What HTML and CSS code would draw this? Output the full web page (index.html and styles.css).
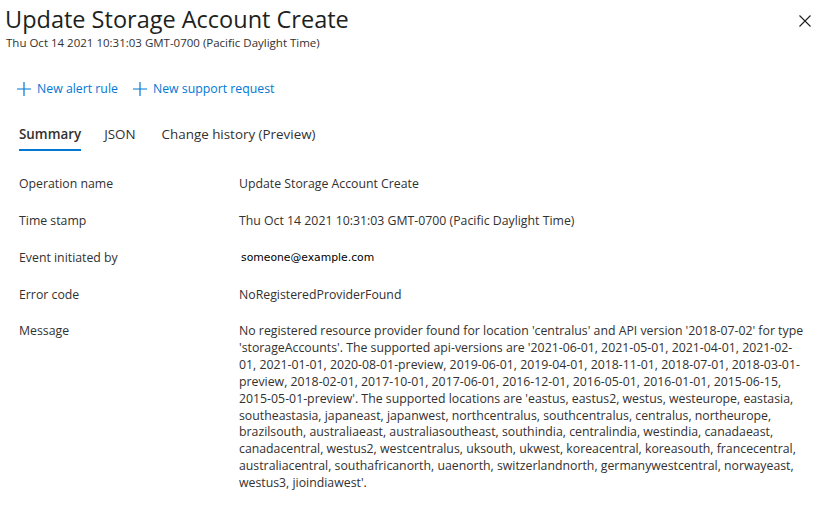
FILE: index.html
```html
<!DOCTYPE html>
<html lang="en">
<head>
<meta charset="utf-8">
<title>Update Storage Account Create</title>
<link rel="stylesheet" href="styles.css">
</head>
<body>
<div class="panel">
  <header class="head">
    <div class="titles">
      <h1 class="title">Update Storage Account Create</h1>
      <div class="subtitle">Thu Oct 14 2021 10:31:03 GMT-0700 (Pacific Daylight Time)</div>
    </div>
    <button class="close" aria-label="Close">
      <svg width="12" height="12" viewBox="0 0 12 12"><path d="M0.5 0.5L11.5 11.5M11.5 0.5L0.5 11.5" stroke="#201f1e" stroke-width="1.1" fill="none"/></svg>
    </button>
  </header>

  <div class="actions">
    <a class="action" href="#">
      <svg width="14" height="14" viewBox="0 0 14 14"><path d="M7 0V14M0 7H14" stroke="#0078d4" stroke-width="1.2" fill="none"/></svg>
      <span>New alert rule</span>
    </a>
    <a class="action" href="#">
      <svg width="14" height="14" viewBox="0 0 14 14"><path d="M7 0V14M0 7H14" stroke="#0078d4" stroke-width="1.2" fill="none"/></svg>
      <span>New support request</span>
    </a>
  </div>

  <nav class="tabs">
    <a class="tab active" href="#">Summary</a>
    <a class="tab" href="#">JSON</a>
    <a class="tab" href="#">Change history (Preview)</a>
  </nav>

  <dl class="details">
    <div class="row"><dt>Operation name</dt><dd>Update Storage Account Create</dd></div>
    <div class="row"><dt>Time stamp</dt><dd>Thu Oct 14 2021 10:31:03 GMT-0700 (Pacific Daylight Time)</dd></div>
    <div class="row"><dt>Event initiated by</dt><dd class="email">someone@example.com</dd></div>
    <div class="row"><dt>Error code</dt><dd>NoRegisteredProviderFound</dd></div>
    <div class="row"><dt>Message</dt><dd class="message">No registered resource provider found for location 'centralus' and API version '2018-07-02' for type<br>'storageAccounts'. The supported api-versions are '2021-06-01, 2021-05-01, 2021-04-01, 2021-02-<br>01, 2021-01-01, 2020-08-01-preview, 2019-06-01, 2019-04-01, 2018-11-01, 2018-07-01, 2018-03-01-<br>preview, 2018-02-01, 2017-10-01, 2017-06-01, 2016-12-01, 2016-05-01, 2016-01-01, 2015-06-15,<br>2015-05-01-preview'. The supported locations are 'eastus, eastus2, westus, westeurope, eastasia,<br>southeastasia, japaneast, japanwest, northcentralus, southcentralus, centralus, northeurope,<br>brazilsouth, australiaeast, australiasoutheast, southindia, centralindia, westindia, canadaeast,<br>canadacentral, westus2, westcentralus, uksouth, ukwest, koreacentral, koreasouth, francecentral,<br>australiacentral, southafricanorth, uaenorth, switzerlandnorth, germanywestcentral, norwayeast,<br>westus3, jioindiawest'.</dd></div>
  </dl>
</div>
</body>
</html>
```
FILE: styles.css
```css
* { box-sizing: border-box; }
html, body { margin: 0; padding: 0; background: #fff; }
body {
  font-family: "Open Sans", "Noto Sans", sans-serif;
  font-size: 12.3px;
  color: #323130;
  width: 832px;
  height: 511px;
  overflow: hidden;
}
.panel { padding: 0 10px 0 0; }

.head {
  display: flex;
  justify-content: space-between;
  align-items: flex-start;
  padding: 3px 7px 0 5px;
}
.title {
  margin: 0;
  font-size: 23.5px;
  font-weight: 400;
  line-height: 32px;
  color: #201f1e;
}
.subtitle {
  font-size: 11.5px;
  line-height: 16px;
  color: #323130;
  margin-left: 1px;
}
.close {
  border: 0;
  background: none;
  padding: 0;
  margin: 11px 3px 0 0;
  width: 14px;
  height: 14px;
  display: flex;
  align-items: center;
  justify-content: center;
}

.actions {
  display: flex;
  gap: 15px;
  padding: 28px 0 0 17px;
}
.action {
  display: flex;
  align-items: center;
  gap: 6px;
  text-decoration: none;
  color: #0078d4;
  line-height: 20px;
}

.tabs {
  display: flex;
  gap: 23px;
  padding: 26px 0 0 19px;
}
.tab {
  text-decoration: none;
  color: #323130;
  font-size: 13.4px;
  line-height: 18px;
  padding: 0 0 6px;
  border-bottom: 2px solid transparent;
}
.tab:nth-child(3) { margin-left: 3px; }
.tab.active {
  font-weight: 600;
  border-bottom-color: #0078d4;
}

.details {
  margin: 0;
  padding: 25px 0 0 19px;
  display: flex;
  flex-direction: column;
  gap: 20px;
}
.row {
  display: grid;
  grid-template-columns: 220px 1fr;
  line-height: 16.85px;
}
.row dt { margin: 0; }
.row dd { margin: 0; }
.row dd.email {
  font-family: "DejaVu Sans", sans-serif;
  font-size: 10.8px;
  color: #000;
  padding-left: 2px;
}
.row dd.message { white-space: nowrap; }
```
